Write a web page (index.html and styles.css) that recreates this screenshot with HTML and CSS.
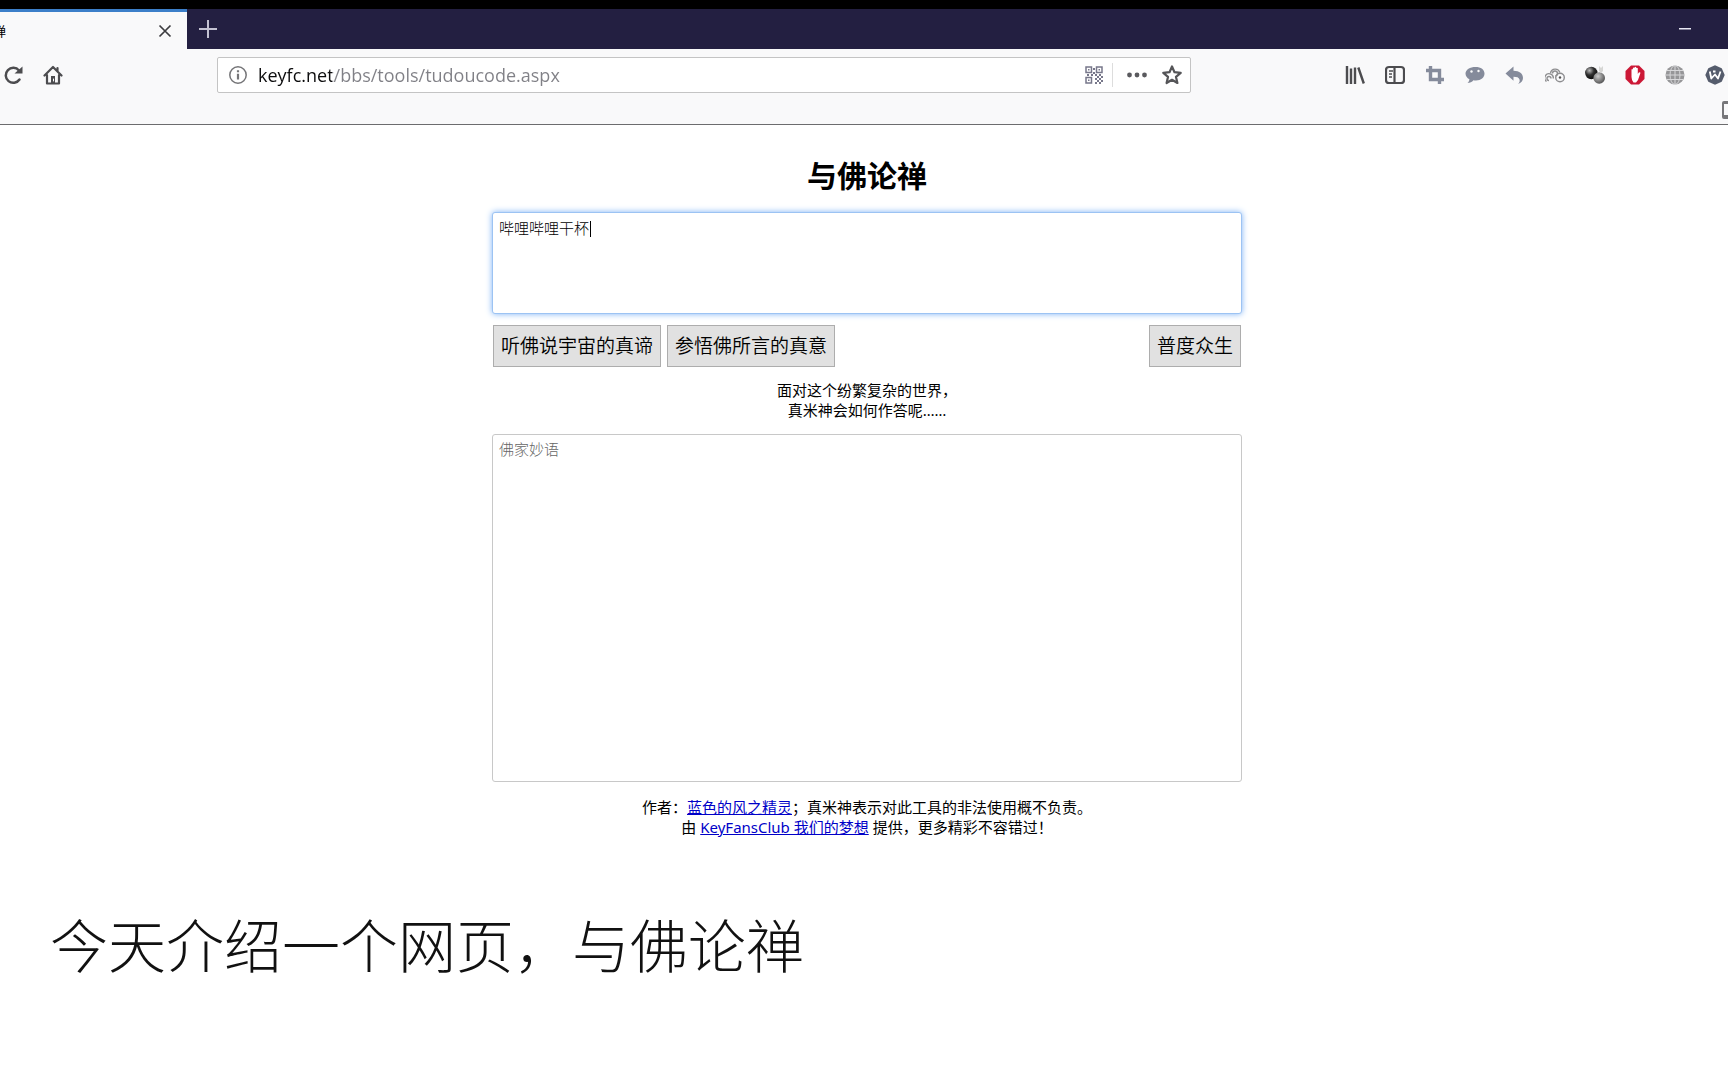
FILE: index.html
```html
<!DOCTYPE html>
<html lang="zh-CN">
<head>
<meta charset="utf-8">
<title>与佛论禅</title>
<link rel="stylesheet" href="styles.css">
</head>
<body>
<header class="browser">
  <div class="tabs">
    <div class="tab">
      <span class="tab-title"><span>与佛论禅</span></span>
      <button class="icon-button" aria-label="关闭标签页"><svg width="20" height="20" viewBox="0 0 20 20" fill="none" stroke="#3c3c40" stroke-width="1.7"><path d="M4.500 4.500l11 11M15.500 4.500l-11 11"/></svg></button>
    </div>
    <button class="icon-button new-tab" aria-label="新标签页"><svg width="20" height="20" viewBox="0 0 20 20" fill="none" stroke="#c3c1d2" stroke-width="2"><path d="M10 1v18M1 10h18"/></svg></button>
    <button class="icon-button minimize" aria-label="最小化"><svg width="20" height="20" viewBox="0 0 20 20"><path d="M4 9h12v1.500H4z" fill="#e8e8f4"/></svg></button>
  </div>
  <nav class="toolbar">
    <div class="group">
      <button class="icon-button" aria-label="刷新"><svg width="20" height="20" viewBox="0 0 20 20" fill="none" stroke="#4c4c4f" stroke-width="2.500" stroke-linecap="round"><path d="M16.500 14.500A7.500 7.500 0 1 1 16 5.500"/><path d="M11.500 8.500h8V1.500z" fill="#4c4c4f" stroke="none"/></svg></button>
      <button class="icon-button" aria-label="主页"><svg width="20" height="20" viewBox="0 0 20 20" fill="none" stroke="#4c4c4f" stroke-width="2.200" stroke-linejoin="round" stroke-linecap="round"><path d="M1.500 10.500L10 2l8.500 8.500M4 10v8.500h12V10M14.500 3v3"/><path d="M8 18v-7h4v7z" fill="#4c4c4f" stroke="none"/><path d="M10.500 14v2" stroke="#fff" stroke-width="1"/></svg></button>
    </div>
    <div class="address">
      <svg width="20" height="20" viewBox="0 0 20 20" fill="none" stroke="#757578" stroke-width="1.500"><circle cx="10" cy="10" r="8.200"/><path d="M10 8.800v5.700M10 5.200v2" stroke-width="2.200"/></svg>
      <input class="url" type="text" aria-label="网址" value="keyfc.net/bbs/tools/tudoucode.aspx">
      <button class="icon-button" aria-label="二维码"><svg width="20" height="20" viewBox="0 0 20 20"><g fill="none" stroke="#77778a" stroke-width="1.500"><path d="M2 2h5.500v5.500H2zM12.500 2H18v5.500h-5.500zM2 12.500h5.500V18H2z"/></g><path fill="#77778a" d="M4 4h1.500v1.500H4zM14.500 4H16v1.500h-1.500zM4 14.500h1.500V16H4zM9 3h2v2H9zM3 9h2v2H3zM7 9h2v2H7zM11 9h2v2h-2zM15 9h2v2h-2zM9 7h2v2H9zM13 11h2v2h-2zM17 11h2v2h-2zM11 13h2v2h-2zM15 13h2v2h-2zM13 15h2v2h-2zM17 15h2v2h-2zM11 17h2v2h-2zM15 17h2v2h-2z"/></svg></button>
      <span class="divider"></span>
      <button class="icon-button" aria-label="页面操作"><svg width="20" height="20" viewBox="0 0 20 20" fill="#5a5a5e"><circle cx="2.500" cy="10" r="2.400"/><circle cx="10" cy="10" r="2.400"/><circle cx="17.500" cy="10" r="2.400"/></svg></button>
      <button class="icon-button star" aria-label="收藏"><svg width="20" height="20" viewBox="0 0 20 20" fill="none" stroke="#555558" stroke-width="2.200" stroke-linejoin="round"><path d="M10 1.500l2.500 5.700 6.200.6-4.700 4.100 1.400 6.100-5.400-3.200L4.600 18 6 11.900 1.300 7.800l6.200-.6z"/></svg></button>
    </div>
    <div class="group">
      <button class="icon-button" aria-label="我的足迹"><svg width="20" height="20" viewBox="0 0 20 20" fill="none" stroke="#4c4c4f" stroke-width="2.400"><path d="M2 1v18M6 3.500V19M10 2.500V19M13.300 2.500L18.800 18.500"/></svg></button>
      <button class="icon-button" aria-label="侧栏"><svg width="20" height="20" viewBox="0 0 20 20" fill="none" stroke="#4c4c4f" stroke-width="2.200"><rect x="1" y="2" width="18" height="16" rx="3"/><path d="M9.500 2v16"/><path d="M4 6h4M4 9h3M4 12h3" stroke-width="1.500"/></svg></button>
      <button class="icon-button" aria-label="截图"><svg width="20" height="20" viewBox="0 0 20 20" fill="none" stroke="#858b9b" stroke-width="3.400"><path d="M1 5.500h13.500V19M5.500 1v13.500H19"/></svg></button>
      <button class="icon-button" aria-label="聊天"><svg width="20" height="20" viewBox="0 0 20 20"><path fill="#858b9b" d="M10.500 2C16 2 19.500 4.700 19.500 8.500S16 15.500 11 15.500c-1 0-2 0-2.600-.2C7 17 5 18 2.500 18c1.200-1 1.900-2.200 1.900-3.700C2 13 .5 11 .5 8.500.5 4.700 5 2 10.500 2z"/><circle cx="6.500" cy="6.500" r="1.200" fill="#f9f9fa"/><circle cx="13.500" cy="6" r="1.200" fill="#f9f9fa"/></svg></button>
      <button class="icon-button" aria-label="撤销"><svg width="20" height="20" viewBox="0 0 20 20"><path fill="#858b9b" d="M8.500 1.500v4.200c6 0 9.500 3 9.500 7.300 0 3-2 5-5 6 1.500-1.500 2-3 1.500-4.500-.7-2-2.500-2.700-6-2.700v4L.5 8.500z"/></svg></button>
      <button class="icon-button" aria-label="同步"><svg width="20" height="20" viewBox="0 0 20 20" fill="none" stroke="#8e8e90" stroke-width="1.400"><path d="M1.500 16.500A4.300 4.300 0 1 1 8.300 13.500M5.500 8a4.800 4.800 0 0 1 9.300-.5M4 15.500a2 2 0 1 1 2-2"/><path d="M7.500 8.500a2.500 2.500 0 1 1 3 2.500"/><circle cx="15" cy="12.500" r="4.300"/><circle cx="15" cy="12.500" r="1.200" fill="#555" stroke="none"/></svg></button>
      <button class="icon-button" aria-label="扩展"><svg width="20" height="20" viewBox="0 0 20 20"><defs><radialGradient id="ball" cx=".35" cy=".3" r=".65"><stop stop-color="#bbb"/><stop offset=".55" stop-color="#303030"/><stop offset="1" stop-color="#111"/></radialGradient><radialGradient id="grayball" cx=".4" cy=".35" r=".65"><stop stop-color="#ccc"/><stop offset="1" stop-color="#555"/></radialGradient></defs><circle cx="6.300" cy="8" r="6.200" fill="url(#ball)"/><circle cx="14.200" cy="13" r="5.800" fill="url(#grayball)"/><path d="M14 1l2 2 2-2v5l-2 2-2-2z" fill="#d6d6d4"/></svg></button>
      <button class="icon-button" aria-label="广告拦截"><svg width="20" height="20" viewBox="0 0 20 20"><path fill="#cc1836" d="M6 .5h8L19.500 6v8L14 19.500H6L.5 14V6z"/><path fill="#fff" d="M6.500 4.500q.7-1 1.400 0V3q.8-1 1.600 0v-.8q.9-.8 1.700 0V3q.9-.7 1.600.2V9l1-1.500q1-.8 1.700.2L13 15l-2 2.500H8.500Q6.500 15 6.500 12z"/></svg></button>
      <button class="icon-button" aria-label="网络"><svg width="20" height="20" viewBox="0 0 20 20"><circle cx="10" cy="10" r="9.500" fill="#969698"/><g fill="none" stroke="#d8d8da"><path d="M10 0v20M0 10h20M2 5.500h16M2 14.500h16"/><ellipse cx="10" cy="10" rx="5" ry="9.500"/></g></svg></button>
      <button class="icon-button" aria-label="翻译"><svg width="20" height="20" viewBox="0 0 20 20"><path fill="#555c6c" d="M10 .3l6.700 2.900 3 6.800-3 6.800-6.700 2.900-6.700-2.900L.3 10l3-6.800z"/><path d="M4.800 6.500l1.500 7L10 9.500l3 4 2.500-7M8 6.500h2.500" fill="none" stroke="#fff" stroke-width="1.800" stroke-linejoin="round"/></svg></button>
    </div>
  </nav>
  <div class="bookmarks">
    <button class="bookmark" aria-label="移动设备书签"><svg width="6" height="18" viewBox="0 0 6 18"><path d="M6 0H2Q0 0 0 2v14q0 2 2 2h4v-4H2V3h4z" fill="#77777a"/></svg></button>
  </div>
</header>
<main class="page">
  <h1>与佛论禅</h1>
  <form>
    <div class="editor">
      <textarea class="box input-box" aria-label="原文">哔哩哔哩干杯</textarea>
      <span class="caret"></span>
    </div>
    <div class="actions">
      <button type="button">听佛说宇宙的真谛</button>
      <button type="button">参悟佛所言的真意</button>
      <button type="button" class="last">普度众生</button>
    </div>
    <p>面对这个纷繁复杂的世界，<br>真米神会如何作答呢……</p>
    <textarea class="box output-box" aria-label="佛家妙语" placeholder="佛家妙语"></textarea>
  </form>
  <footer>作者：<a href="#author">蓝色的风之精灵</a>；真米神表示对此工具的非法使用概不负责。<br>由 <a href="#club">KeyFansClub 我们的梦想</a> 提供，更多精彩不容错过！</footer>
</main>
<div class="caption">今天介绍一个网页，与佛论禅</div>
</body>
</html>
```
FILE: styles.css
```css
* { box-sizing: border-box; }
body {
  margin: 0;
  background: #fff;
  color: #000;
  font: 15px/20px "Noto Sans", "Noto Sans CJK SC", sans-serif;
  overflow-x: hidden;
}
button, input, textarea { font: inherit; }
svg { display: block; flex: none; }

.browser {
  background: #f9f9fa;
  border-top: 9px solid #000;
  border-bottom: 1px solid #6c6c6e;
}
.tabs {
  display: flex;
  align-items: center;
  height: 40px;
  background: #231f41;
}
.tab {
  display: flex;
  align-items: center;
  justify-content: space-between;
  width: 187px;
  height: 40px;
  padding-right: 12px;
  border-top: 3px solid #3c7fc9;
  background: #f9f9fa;
}
.tab-title {
  display: flex;
  justify-content: flex-end;
  width: 6px;
  overflow: hidden;
  font-size: 13px;
  white-space: nowrap;
}
.icon-button {
  flex: none;
  padding: 0;
  border: 0;
  background: none;
}
.new-tab { margin-left: 11px; }
.minimize { margin: 0 33px 0 auto; }

.toolbar {
  display: flex;
  align-items: center;
  height: 52px;
  padding: 0 3px;
}
.group { display: flex; gap: 20px; }
.address {
  display: flex;
  flex: 1;
  align-items: center;
  height: 36px;
  margin: 0 154px;
  padding: 0 8px 0 10px;
  border: 1px solid #c4c4c4;
  border-radius: 2px;
  background: #fff;
}
.url {
  flex: 1;
  min-width: 0;
  height: 32px;
  margin-left: 10px;
  padding: 0;
  border: 0;
  outline: 0;
  color: #808086;
  font-family: "Open Sans", "Noto Sans", sans-serif;
  font-size: 18px;
  background: linear-gradient(90deg, #0c0c0d 74px, #808086 74px);
  background-clip: text;
  -webkit-text-fill-color: transparent;
}
.divider {
  width: 1px;
  height: 24px;
  margin: 0 14px 0 8px;
  background: #ddd;
}
.star { margin-left: 15px; }
.bookmarks {
  display: flex;
  align-items: flex-start;
  justify-content: flex-end;
  height: 23px;
}
.bookmark {
  padding: 0;
  border: 0;
  background: none;
}

.page {
  width: 756px;
  margin: 0 auto;
  padding: 31px 0 0 6px;
  text-align: center;
}
h1 {
  margin: 0 0 16px;
  font-size: 30px;
  line-height: 40px;
}
.editor { position: relative; }
.box {
  display: block;
  width: 100%;
  padding: 5px 6px;
  border: 1px solid #c8c8c8;
  border-radius: 3px;
  background: #fff;
  color: #000;
  font-family: "Noto Sans CJK SC", sans-serif;
  font-weight: 300;
  outline: 0;
  resize: none;
}
.box::placeholder { color: #666; }
.input-box {
  height: 102px;
  border-color: #9cc3f3;
  box-shadow: 0 0 6px #7db2f5;
}
.caret {
  position: absolute;
  left: 98px;
  top: 9px;
  width: 1px;
  height: 16px;
  background: #000;
}
.actions {
  display: flex;
  gap: 6px;
  margin-top: 11px;
  padding: 0 1px;
}
.actions button {
  height: 42px;
  padding: 0 7px;
  border: 1px solid #adadad;
  background: #e1e1e1;
  color: #000;
  font-size: 19px;
  font-weight: 350;
}
.actions .last { margin-left: auto; }
p { margin: 13px 0 14px; }
.output-box {
  height: 348px;
  padding-top: 4px;
}
footer { padding-top: 15px; }
a { color: #0000c8; }
.caption {
  padding: 64px 50px 40px;
  font: 300 58px/84px "Noto Sans CJK SC", sans-serif;
  color: #111;
}
```
